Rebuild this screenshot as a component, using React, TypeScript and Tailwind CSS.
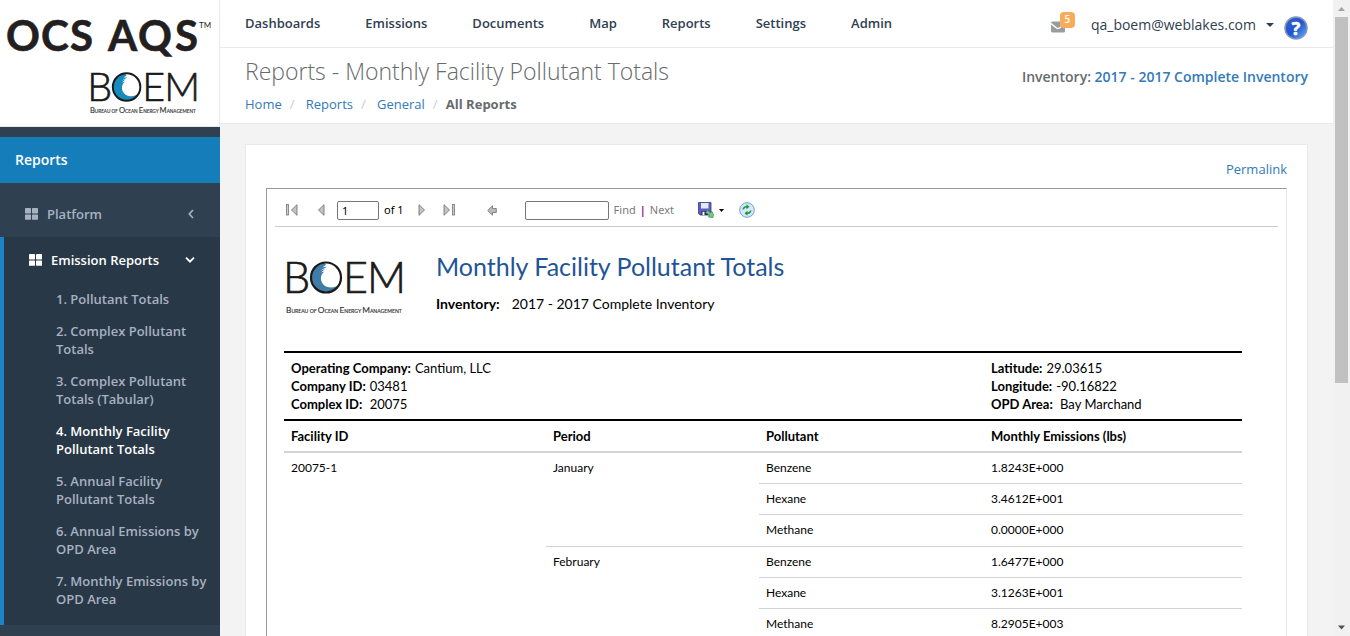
import React from "react";

const UI_FONT = "font-['Open_Sans','Noto_Sans',sans-serif]";
const REPORT_FONT = "font-['Lato','Open_Sans',sans-serif]";

function BoemLogo({ className, wave, captionY }: { className: string; wave: string; captionY: number }) {
  return (
    <svg viewBox="0 0 118 60" className={"overflow-visible " + className} role="img" aria-label="BOEM">
      <g fontFamily="Lato, sans-serif" fontWeight={300} fontSize={43} fill="#1a1a1a" stroke="#1a1a1a" strokeWidth={0.7}>
        <text x="-3" y="33">B</text>
        <text x="57" y="33">E</text>
        <text x="81" y="33">M</text>
      </g>
      <circle cx="40" cy="17.5" r="15.2" fill="#fff" />
      <path
        d="M38 2.600A15 15 0 1 0 54 23.500C51 27.500 43 29 38.500 25.500C34 22 33.500 15 38.500 11.500L35 12.500L39 9L34.500 10.500L41 6.800L36.500 7.300L40 5Z"
        fill={wave}
      />
      <circle cx="40" cy="17.5" r="15" fill="none" stroke="#1a1a1a" strokeWidth="2.200" />
      <g fontFamily="Lato, sans-serif" fill="#333" fontSize={5.1} stroke="#333" strokeWidth={0.15}>
        <text x="0" y={captionY}>
          <tspan fontSize={8.3}>B</tspan>UREAU OF <tspan fontSize={8.3}>O</tspan>CEAN{" "}
          <tspan fontSize={8.3}>E</tspan>NERGY <tspan fontSize={8.3}>M</tspan>ANAGEMENT
        </text>
      </g>
    </svg>
  );
}

function GridIcon() {
  return (
    <svg viewBox="0 0 13 12" className="h-3 w-[13px] shrink-0" fill="currentColor" aria-hidden="true">
      <rect x="0" y="0" width="6" height="5.400" rx="0.6" />
      <rect x="7" y="0" width="6" height="5.400" rx="0.6" />
      <rect x="0" y="6.400" width="6" height="5.400" rx="0.6" />
      <rect x="7" y="6.400" width="6" height="5.400" rx="0.6" />
    </svg>
  );
}

const reports = [
  "1. Pollutant Totals",
  "2. Complex Pollutant Totals",
  "3. Complex Pollutant Totals (Tabular)",
  "4. Monthly Facility Pollutant Totals",
  "5. Annual Facility Pollutant Totals",
  "6. Annual Emissions by OPD Area",
  "7. Monthly Emissions by OPD Area",
];

function Sidebar() {
  return (
    <aside className="flex w-[220px] shrink-0 flex-col bg-[#2f4050]">
      <div className="flex h-[127px] shrink-0 flex-col border-r border-b border-[#e7eaec] bg-white">
        <svg viewBox="0 0 219 71" className="h-[71px] w-full shrink-0" role="img" aria-label="OCS AQS">
          <g fontFamily="Lato, sans-serif" fontWeight={700} fontSize={42} fill="#231f20" stroke="#231f20" strokeWidth={0.6}>
            <text x="6" y="51">O</text>
            <text x="41" y="51">C</text>
            <text x="70" y="51">S</text>
            <text x="108" y="51">A</text>
            <text x="138" y="51">Q</text>
            <text x="175" y="51">S</text>
          </g>
          <text x="199" y="28" fontFamily="Lato, sans-serif" fontSize={8} fill="#231f20">TM</text>
        </svg>
        <BoemLogo className="mr-[19px] h-[55px] w-28 self-end" wave="#168bbd" captionY={46} />
      </div>
      <h2 className="mt-2.5 flex h-[46px] shrink-0 items-center bg-[#167dbb] px-[15px] text-sm font-semibold text-white">Reports</h2>
      <nav className="text-[13px] leading-[18px] font-semibold text-[#a7b1c2]">
        <a href="#platform" className="flex h-[54px] items-center gap-[9px] pt-2 pr-[25px] pl-[25px]">
          <GridIcon />
          <span className="flex-1">Platform</span>
          <svg viewBox="0 0 8 10" className="h-2.5 w-2" fill="none" stroke="currentColor" strokeWidth="1.7"><path d="M6 1L2.300 5L6 9" /></svg>
        </a>
        <div className="border-l-4 border-[#1c84c6] bg-[#293846] pb-2.5">
          <a href="#emission" className="flex h-[46px] items-center gap-[9px] pr-[25px] pl-[25px] text-white">
            <GridIcon />
            <span className="flex-1">Emission Reports</span>
            <svg viewBox="0 0 10 8" className="h-2 w-2.5" fill="none" stroke="currentColor" strokeWidth="1.900"><path d="M1 1.700L5 5.700L9 1.700" /></svg>
          </a>
          <ul>
            {reports.map((r, i) => (
              <li key={r}>
                <a href={"#report-" + (i + 1)} className={"block py-[7px] pr-2.5 pl-[52px] " + (i === 3 ? "text-white" : "")}>{r}</a>
              </li>
            ))}
          </ul>
        </div>
      </nav>
    </aside>
  );
}

const menu = ["Dashboards", "Emissions", "Documents", "Map", "Reports", "Settings", "Admin"];

function TopBar() {
  return (
    <header className="flex h-12 shrink-0 items-center justify-between border-b border-[#e7eaec] bg-white pr-[25px] pl-[25px]">
      <nav className="flex gap-[45px] text-[13px] font-semibold text-[#2f4050]">
        {menu.map((m) => <a key={m} href={"#" + m.toLowerCase()}>{m}</a>)}
      </nav>
      <div className="flex items-center">
        <button type="button" aria-label="Messages" className="relative h-6 w-6">
          <svg viewBox="0 0 14 12" className="mt-[7px] h-3 w-3.5" aria-hidden="true">
            <rect width="14" height="11" y="0.500" rx="1.500" fill="#999c9e" />
            <path d="M0 2.500L5.500 7Q7 8 8.500 7L14 2.500" fill="none" stroke="#fff" strokeWidth="1.400" />
          </svg>
          <span className="absolute top-0 left-[9px] flex h-4 w-[15px] items-center justify-center rounded-sm bg-[#f8ac59] text-[10px] font-semibold text-white">5</span>
        </button>
        <button type="button" className="ml-4 flex items-center gap-2.5 pt-0.5 text-sm font-medium text-[#2f4050]">
          qa_boem@weblakes.com
          <svg viewBox="0 0 8 4" className="h-1 w-2" fill="currentColor"><path d="M0 0H8L4 4Z" /></svg>
        </button>
        <button type="button" aria-label="Help" className="ml-2.5 pt-2">
          <svg viewBox="0 0 24 24" className="size-6">
            <defs>
              <linearGradient id="help" x1="0" y1="0" x2="1" y2="1">
                <stop offset="0" stopColor="#3f62c8" /><stop offset="0.500" stopColor="#1f55d0" /><stop offset="1" stopColor="#6bb5fb" />
              </linearGradient>
            </defs>
            <circle cx="12" cy="12" r="11" fill="url(#help)" stroke="#8797bd" strokeWidth="1.500" />
            <text x="12" y="18.500" textAnchor="middle" fontFamily="Open Sans, sans-serif" fontWeight={700} fontSize={18} fill="#fff" stroke="#fff" strokeWidth={0.6}>?</text>
          </svg>
        </button>
      </div>
    </header>
  );
}

function PageHeading() {
  return (
    <section className="flex h-[76px] shrink-0 justify-between border-b border-[#e7eaec] bg-white pr-[25px] pl-[25px]">
      <div>
        <h1 className="mt-[7px] text-[23px] leading-8 font-light text-[#676a6c]">Reports - Monthly Facility Pollutant Totals</h1>
        <nav className="mt-2 flex text-[13px] leading-[18px] text-[#337ab7]">
          <a href="#home">Home</a>
          <span className="w-6 pl-2 text-[#ccc]">/</span>
          <a href="#reports">Reports</a>
          <span className="w-6 pl-2 text-[#ccc]">/</span>
          <a href="#general">General</a>
          <span className="w-[21px] pl-2 text-[#ccc]">/</span>
          <strong className="text-[#676a6c]">All Reports</strong>
        </nav>
      </div>
      <p className="mt-[19px] text-sm font-semibold text-[#676a6c]">
        Inventory: <a href="#inventory" className="text-[#337ab7]">2017 - 2017 Complete Inventory</a>
      </p>
    </section>
  );
}

function NavArrow({ dir, bar }: { dir: "left" | "right"; bar?: boolean }) {
  return (
    <svg viewBox="0 0 12 12" className={"h-3 w-3 " + (dir === "right" ? "-scale-x-100" : "")} aria-hidden="true">
      {bar && <rect x="0.500" y="0.500" width="2" height="10.500" fill="#ccc" stroke="#777" strokeWidth="0.800" />}
      <path d="M11 0.700V11.300L5.500 6Z" fill="#c4c4c4" stroke="#777" strokeWidth="0.900" />
    </svg>
  );
}

function Toolbar() {
  return (
    <div className="mx-2 flex h-[38px] items-center border-b border-[#ccc] pt-[5px] pl-[11px] font-['Noto_Sans',sans-serif] text-[11px] text-black">
      <button type="button" aria-label="First page"><NavArrow dir="left" bar /></button>
      <button type="button" aria-label="Previous page" className="ml-[15px]"><NavArrow dir="left" /></button>
      <input aria-label="Current page" defaultValue="1" className="ml-3 h-[19px] w-[42px] rounded-xs border border-[#767676] px-1" />
      <span className="ml-[5px]">of 1</span>
      <button type="button" aria-label="Next page" className="ml-3.5"><NavArrow dir="right" /></button>
      <button type="button" aria-label="Last page" className="ml-[13px]"><NavArrow dir="right" bar /></button>
      <button type="button" aria-label="Back to parent report" className="ml-8">
        <svg viewBox="0 0 10 11" className="h-[11px] w-2.5"><path d="M0.700 5.500L5.500 0.800V3.500H9.300V7.500H5.500V10.200Z" fill="#bbb" stroke="#777" strokeWidth="0.900" /></svg>
      </button>
      <input aria-label="Find text" className="ml-7 h-[19px] w-[84px] rounded-xs border border-[#767676] px-1" />
      <a href="#find" className="ml-[5px] text-[#7a7a7a]">Find</a>
      <span className="mx-1 font-semibold text-[#800080]">|</span>
      <a href="#next" className="text-[#7a7a7a]">Next</a>
      <button type="button" aria-label="Export" className="ml-6 flex items-center gap-[5px]">
        <svg viewBox="0 0 16 16" className="size-4">
          <path d="M0.500 0.500H13V13H2L0.500 11.500Z" fill="#5a60c0" stroke="#35398c" strokeWidth="0.800" />
          <rect x="3" y="1" width="7.500" height="5.500" fill="#e4e7fa" />
          <rect x="3.500" y="9" width="6.500" height="4" fill="#23265c" />
          <rect x="4.500" y="9.700" width="2" height="3.300" fill="#fff" />
          <path d="M7.500 10.500L9.500 8.300L12.500 11L13.800 9.300L15.500 12.500L15 15.500L10.500 15L11.500 13.300Z" fill="#7cc98a" stroke="#2f8a45" strokeWidth="0.700" />
        </svg>
        <svg viewBox="0 0 5 3" className="h-[3px] w-[5px]"><path d="M0 0H5L2.500 3Z" /></svg>
      </button>
      <button type="button" aria-label="Refresh" className="ml-[15px]">
        <svg viewBox="0 0 16 16" className="size-4">
          <circle cx="8" cy="8" r="7.300" fill="#d4e8fb" stroke="#6f9fd8" />
          <path d="M3.500 7.500C3.800 5 5.500 3.800 7.500 4V2.300L10.500 4.800L7.500 7.300V5.800C6 5.600 5.300 6.200 5.100 7.500Z" fill="#219a36" />
          <path d="M12.500 8.500C12.200 11 10.500 12.200 8.500 12V13.700L5.500 11.200L8.500 8.700V10.200C10 10.400 10.700 9.800 10.900 8.500Z" fill="#219a36" />
        </svg>
      </button>
    </div>
  );
}

const months = [
  { name: "January", rows: [["Benzene", "1.8243E+000"], ["Hexane", "3.4612E+001"], ["Methane", "0.0000E+000"]] },
  { name: "February", rows: [["Benzene", "1.6477E+000"], ["Hexane", "3.1263E+001"], ["Methane", "8.2905E+003"]] },
];

function Field({ label, value }: { label: string; value: string }) {
  return <p className="flex gap-1 whitespace-pre"><b>{label}</b><span>{value}</span></p>;
}

function Report() {
  return (
    <div className={"mr-[44px] ml-[17px] text-black " + REPORT_FONT}>
      <div className="flex h-[124px]">
        <BoemLogo className="mt-[33px] ml-0.5 h-[60px] w-[118px] shrink-0" wave="#3f7ca8" captionY={53} />
        <div className="ml-8">
          <h2 className="mt-[23px] text-[25px] leading-8 text-[#1f5597]">Monthly Facility Pollutant Totals</h2>
          <p className="mt-3 flex gap-3 text-sm"><b>Inventory:</b><span>2017 - 2017 Complete Inventory</span></p>
        </div>
      </div>
      <div className="flex h-[68px] border-t-2 border-black px-[7px] pt-1.5 text-[13px] leading-[18px]">
        <div className="flex-1">
          <Field label="Operating Company:" value="Cantium, LLC" />
          <Field label="Company ID:" value="03481" />
          <Field label="Complex ID:" value=" 20075" />
        </div>
        <div className="w-[244px]">
          <Field label="Latitude:" value="29.03615" />
          <Field label="Longitude:" value="-90.16822" />
          <Field label="OPD Area:" value=" Bay Marchand" />
        </div>
      </div>
      <table className="w-full table-fixed border-collapse text-left text-xs">
        <colgroup><col /><col className="w-[213px]" /><col className="w-[225px]" /><col className="w-[258px]" /></colgroup>
        <thead>
          <tr className="h-8 border-t-2 border-b-2 border-t-black border-b-[#d3d3d3] text-[13px]">
            {["Facility ID", "Period", "Pollutant", "Monthly Emissions (lbs)"].map((h) => <th key={h} className="px-[7px] pt-0.5 font-bold">{h}</th>)}
          </tr>
        </thead>
        <tbody>
          {months.map((m, mi) =>
            m.rows.map(([name, amount], i) => (
              <tr key={m.name + name} className={i === 2 ? "h-8" : "h-[31px]"}>
                {mi === 0 && i === 0 && <td rowSpan={6} className="px-[7px] pt-[7px] align-top">20075-1</td>}
                {i === 0 && <td rowSpan={3} className="border-b border-[#d3d3d3] px-[7px] pt-[7px] align-top">{m.name}</td>}
                <td className="border-b border-[#d3d3d3] px-[7px]">{name}</td>
                <td className="border-b border-[#d3d3d3] px-[7px]">{amount}</td>
              </tr>
            )),
          )}
        </tbody>
      </table>
    </div>
  );
}

function ScrollRail() {
  return (
    <div aria-hidden="true" className="flex w-[17px] shrink-0 flex-col items-center bg-[#f1f1f1]">
      <svg viewBox="0 0 17 17" className="size-[17px] shrink-0" fill="#a3a3a3"><path d="M5 11H12L8.500 7Z" /></svg>
      <div className="h-[366px] w-[13px] bg-[#c1c1c1]" />
      <svg viewBox="0 0 17 17" className="mt-auto size-[17px] shrink-0" fill="#505050"><path d="M5 6.500H12L8.500 10.500Z" /></svg>
    </div>
  );
}

export default function App() {
  return (
    <div className={"flex h-screen overflow-hidden bg-[#f3f3f4] " + UI_FONT}>
      <Sidebar />
      <div className="flex min-w-0 flex-1 flex-col">
        <TopBar />
        <PageHeading />
        <main className="min-h-0 flex-1 overflow-hidden px-[25px] pt-5">
          <div className="border border-[#e7eaec] bg-white px-5 pb-5">
            <div className="flex h-[43px] items-center justify-end pt-1.5 text-[13px]">
              <a href="#permalink" className="text-[#337ab7]">Permalink</a>
            </div>
            <div className="border border-t-[#999] border-r-[#e7eaec] border-b-[#999] border-l-[#999]">
              <Toolbar />
              <Report />
            </div>
          </div>
        </main>
      </div>
      <ScrollRail />
    </div>
  );
}
